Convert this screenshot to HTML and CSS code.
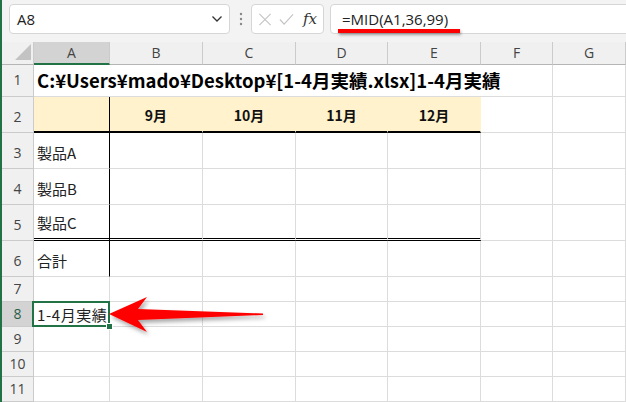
FILE: index.html
```html
<!DOCTYPE html>
<html lang="ja">
<head>
    <meta charset="UTF-8">
    <title>Excel - MID</title>
    <link rel="stylesheet" href="styles.css">
</head>
<body>
<div class="window">
    <div class="toolbar">
        <div class="namebox">
            <span>A8</span>
            <svg class="chevron" width="12" height="8" viewBox="0 0 12 8"><path d="M1.5 1.5 L6 6 L10.5 1.5" fill="none" stroke="#333" stroke-width="1.3"/></svg>
        </div>
        <div class="dots">
            <svg width="4" height="14" viewBox="0 0 4 14"><circle cx="2" cy="2" r="1.2" fill="#888"/><circle cx="2" cy="7" r="1.2" fill="#888"/><circle cx="2" cy="12" r="1.2" fill="#888"/></svg>
        </div>
        <div class="fxbox">
            <svg width="15" height="15" viewBox="0 0 15 15"><path d="M1.5 1.5 L13.5 13.5 M13.5 1.5 L1.5 13.5" stroke="#c4c4c4" stroke-width="1.2"/></svg>
            <svg width="16" height="15" viewBox="0 0 16 15"><path d="M1 7.5 L5.5 12.5 L15 2" fill="none" stroke="#c4c4c4" stroke-width="1.2"/></svg>
            <span class="fx">fx</span>
        </div>
        <div class="formula">
            <span>=MID(A1,36,99)</span>
            <div class="mark"></div>
        </div>
    </div>

    <div class="sheet">
        <div class="row colhead">
            <div class="hd corner">
                <svg width="16" height="16" viewBox="0 0 16 16"><path d="M16 0 L16 16 L0 16 Z" fill="#c3c3c3"/></svg>
            </div>
            <div class="hd sel">A</div>
            <div class="hd">B</div>
            <div class="hd">C</div>
            <div class="hd">D</div>
            <div class="hd">E</div>
            <div class="hd">F</div>
            <div class="hd">G</div>
        </div>

        <div class="row r1">
            <div class="hd">1</div>
            <div class="cell title">C:¥Users¥mado¥Desktop¥[1-4月実績.xlsx]1-4月実績</div>
            <div class="cell"></div>
        </div>

        <div class="row tall">
            <div class="hd">2</div>
            <div class="cell fill head vline"></div>
            <div class="cell fill head month">9月</div>
            <div class="cell fill head month">10月</div>
            <div class="cell fill head month">11月</div>
            <div class="cell fill head month">12月</div>
            <div class="cell"></div>
            <div class="cell"></div>
        </div>

        <div class="row tall">
            <div class="hd">3</div>
            <div class="cell vline label">製品A</div>
            <div class="cell"></div><div class="cell"></div><div class="cell"></div><div class="cell"></div><div class="cell"></div><div class="cell"></div>
        </div>

        <div class="row tall">
            <div class="hd">4</div>
            <div class="cell vline label">製品B</div>
            <div class="cell"></div><div class="cell"></div><div class="cell"></div><div class="cell"></div><div class="cell"></div><div class="cell"></div>
        </div>

        <div class="row tall">
            <div class="hd">5</div>
            <div class="cell vline label dbl">製品C</div>
            <div class="cell dbl"></div><div class="cell dbl"></div><div class="cell dbl"></div><div class="cell dbl"></div><div class="cell"></div><div class="cell"></div>
        </div>

        <div class="row tall">
            <div class="hd">6</div>
            <div class="cell vline label">合計</div>
            <div class="cell"></div><div class="cell"></div><div class="cell"></div><div class="cell"></div><div class="cell"></div><div class="cell"></div>
        </div>

        <div class="row short">
            <div class="hd">7</div>
            <div class="cell"></div><div class="cell"></div><div class="cell"></div><div class="cell"></div><div class="cell"></div><div class="cell"></div><div class="cell"></div>
        </div>

        <div class="row short">
            <div class="hd sel-row">8</div>
            <div class="cell active">1-4月実績<div class="cursor"><span class="handle"></span></div></div>
            <div class="cell"></div><div class="cell"></div><div class="cell"></div><div class="cell"></div><div class="cell"></div><div class="cell"></div>
        </div>

        <div class="row short">
            <div class="hd">9</div>
            <div class="cell"></div><div class="cell"></div><div class="cell"></div><div class="cell"></div><div class="cell"></div><div class="cell"></div><div class="cell"></div>
        </div>

        <div class="row short">
            <div class="hd">10</div>
            <div class="cell"></div><div class="cell"></div><div class="cell"></div><div class="cell"></div><div class="cell"></div><div class="cell"></div><div class="cell"></div>
        </div>

        <div class="row short">
            <div class="hd">11</div>
            <div class="cell"></div><div class="cell"></div><div class="cell"></div><div class="cell"></div><div class="cell"></div><div class="cell"></div><div class="cell"></div>
        </div>
    </div>

    <svg class="arrow" width="170" height="50" viewBox="0 0 170 50">
        <defs>
            <filter id="sh" x="-10%" y="-30%" width="130%" height="170%">
                <feDropShadow dx="2" dy="3" stdDeviation="2" flood-color="#000" flood-opacity="0.35"/>
            </filter>
        </defs>
        <path d="M3 23 L41 6 L32 18 L157 22.5 L157 24 L32 29 L41 41 Z" fill="#ff0000" filter="url(#sh)"/>
    </svg>
</div>
</body>
</html>
```

FILE: styles.css
```css
body {
    margin: 0;
    background: #fff;
    font-family: "Noto Sans CJK JP", "Noto Sans", sans-serif;
}
.window {
    width: 626px;
    height: 402px;
    overflow: hidden;
    border-left: 2px solid #217346;
    box-sizing: border-box;
    position: relative;
}

/* formula bar */
.toolbar {
    height: 42px;
    box-sizing: border-box;
    padding: 4px 0 0 7px;
    background: #f3f3f3;
    display: flex;
    align-items: flex-start;
}
.namebox, .fxbox, .formula {
    height: 30px;
    box-sizing: border-box;
    background: #fff;
    border: 1px solid #d6d6d6;
    border-radius: 4px;
    display: flex;
    align-items: center;
}
.namebox {
    width: 221px;
    padding: 0 6px 0 7px;
    justify-content: space-between;
    font-family: "Open Sans", "Noto Sans", sans-serif;
    font-size: 15px;
    color: #222;
}
.dots {
    width: 21px;
    height: 30px;
    display: flex;
    align-items: center;
    justify-content: center;
}
.fxbox {
    width: 73px;
    padding: 0 6px;
    gap: 7px;
}
.fx {
    font-family: "DejaVu Serif", "Liberation Serif", serif;
    font-style: italic;
    font-size: 15px;
    color: #333;
    margin-left: 2px;
}
.formula {
    flex: 1;
    margin-left: 6px;
    margin-right: -10px;
    padding-left: 11px;
    font-family: "Open Sans", "Noto Sans", sans-serif;
    font-size: 15px;
    color: #222;
    position: relative;
}
.mark {
    position: absolute;
    left: 7px;
    top: 24px;
    width: 122px;
    height: 4px;
    background: #ff0000;
    box-shadow: 1px 2px 3px rgba(0, 0, 0, 0.35);
}

/* sheet grid */
.row {
    display: grid;
    grid-template-columns: 32px 76px 93px 93px 92px 93px 72px 73px;
}
.colhead { height: 23px; }
.r1 { height: 32px; }
.tall { height: 36px; }
.short { height: 25px; }

.hd, .cell {
    box-sizing: border-box;
    display: flex;
    align-items: flex-end;
    white-space: nowrap;
    line-height: 1;
}
.hd {
    justify-content: center;
    background: #f0f0f0;
    border-right: 1px solid #cbcbcb;
    border-bottom: 1px solid #cbcbcb;
    font-family: "Open Sans", "Noto Sans", sans-serif;
    font-size: 14px;
    color: #444;
    padding-bottom: 8px;
}
.short .hd { padding-bottom: 5px; }
.r1 .hd { padding-bottom: 9px; }
.colhead .hd {
    align-items: center;
    padding-bottom: 0;
    border-bottom-color: #b5b5b5;
}
.colhead .hd.sel {
    background: #d3d3d3;
    border-bottom: 2px solid #217346;
}
.hd.sel-row {
    background: #d3d3d3;
    color: #2a6048;
}
.corner {
    justify-content: flex-end;
    align-items: flex-end;
}
.colhead .corner svg {
    margin: 0 2px 2px 0;
}

.cell {
    border-right: 1px solid #dcdcdc;
    border-bottom: 1px solid #dcdcdc;
    padding: 0 3px 5px;
    font-size: 15px;
    color: #222;
}

.title {
    grid-column: span 6;
    align-items: center;
    padding-bottom: 0;
    font-size: 18.5px;
    font-weight: bold;
    color: #000;
}

.fill {
    background: #fff2cc;
}
.cell.head {
    border-right-color: #fff2cc;
    border-bottom: 2px solid #000;
}
.month {
    justify-content: center;
    align-items: center;
    padding-bottom: 0;
    padding-top: 1px;
    font-weight: bold;
    font-size: 14px;
    color: #111;
}
.cell.vline {
    border-right: 1px solid #000;
}
.label {
    padding-bottom: 8px;
}
.cell.dbl {
    border-bottom: 3px double #000;
}

.active {
    position: relative;
    padding-bottom: 4px;
    letter-spacing: 0.6px;
}
.cursor {
    position: absolute;
    left: -2px;
    top: -1px;
    right: -1px;
    bottom: -1px;
    border: 2px solid #217346;
}
.handle {
    position: absolute;
    right: -5px;
    bottom: -5px;
    width: 5px;
    height: 5px;
    background: #217346;
    border: 1px solid #fff;
}

.arrow {
    position: absolute;
    left: 104px;
    top: 291px;
}
```
